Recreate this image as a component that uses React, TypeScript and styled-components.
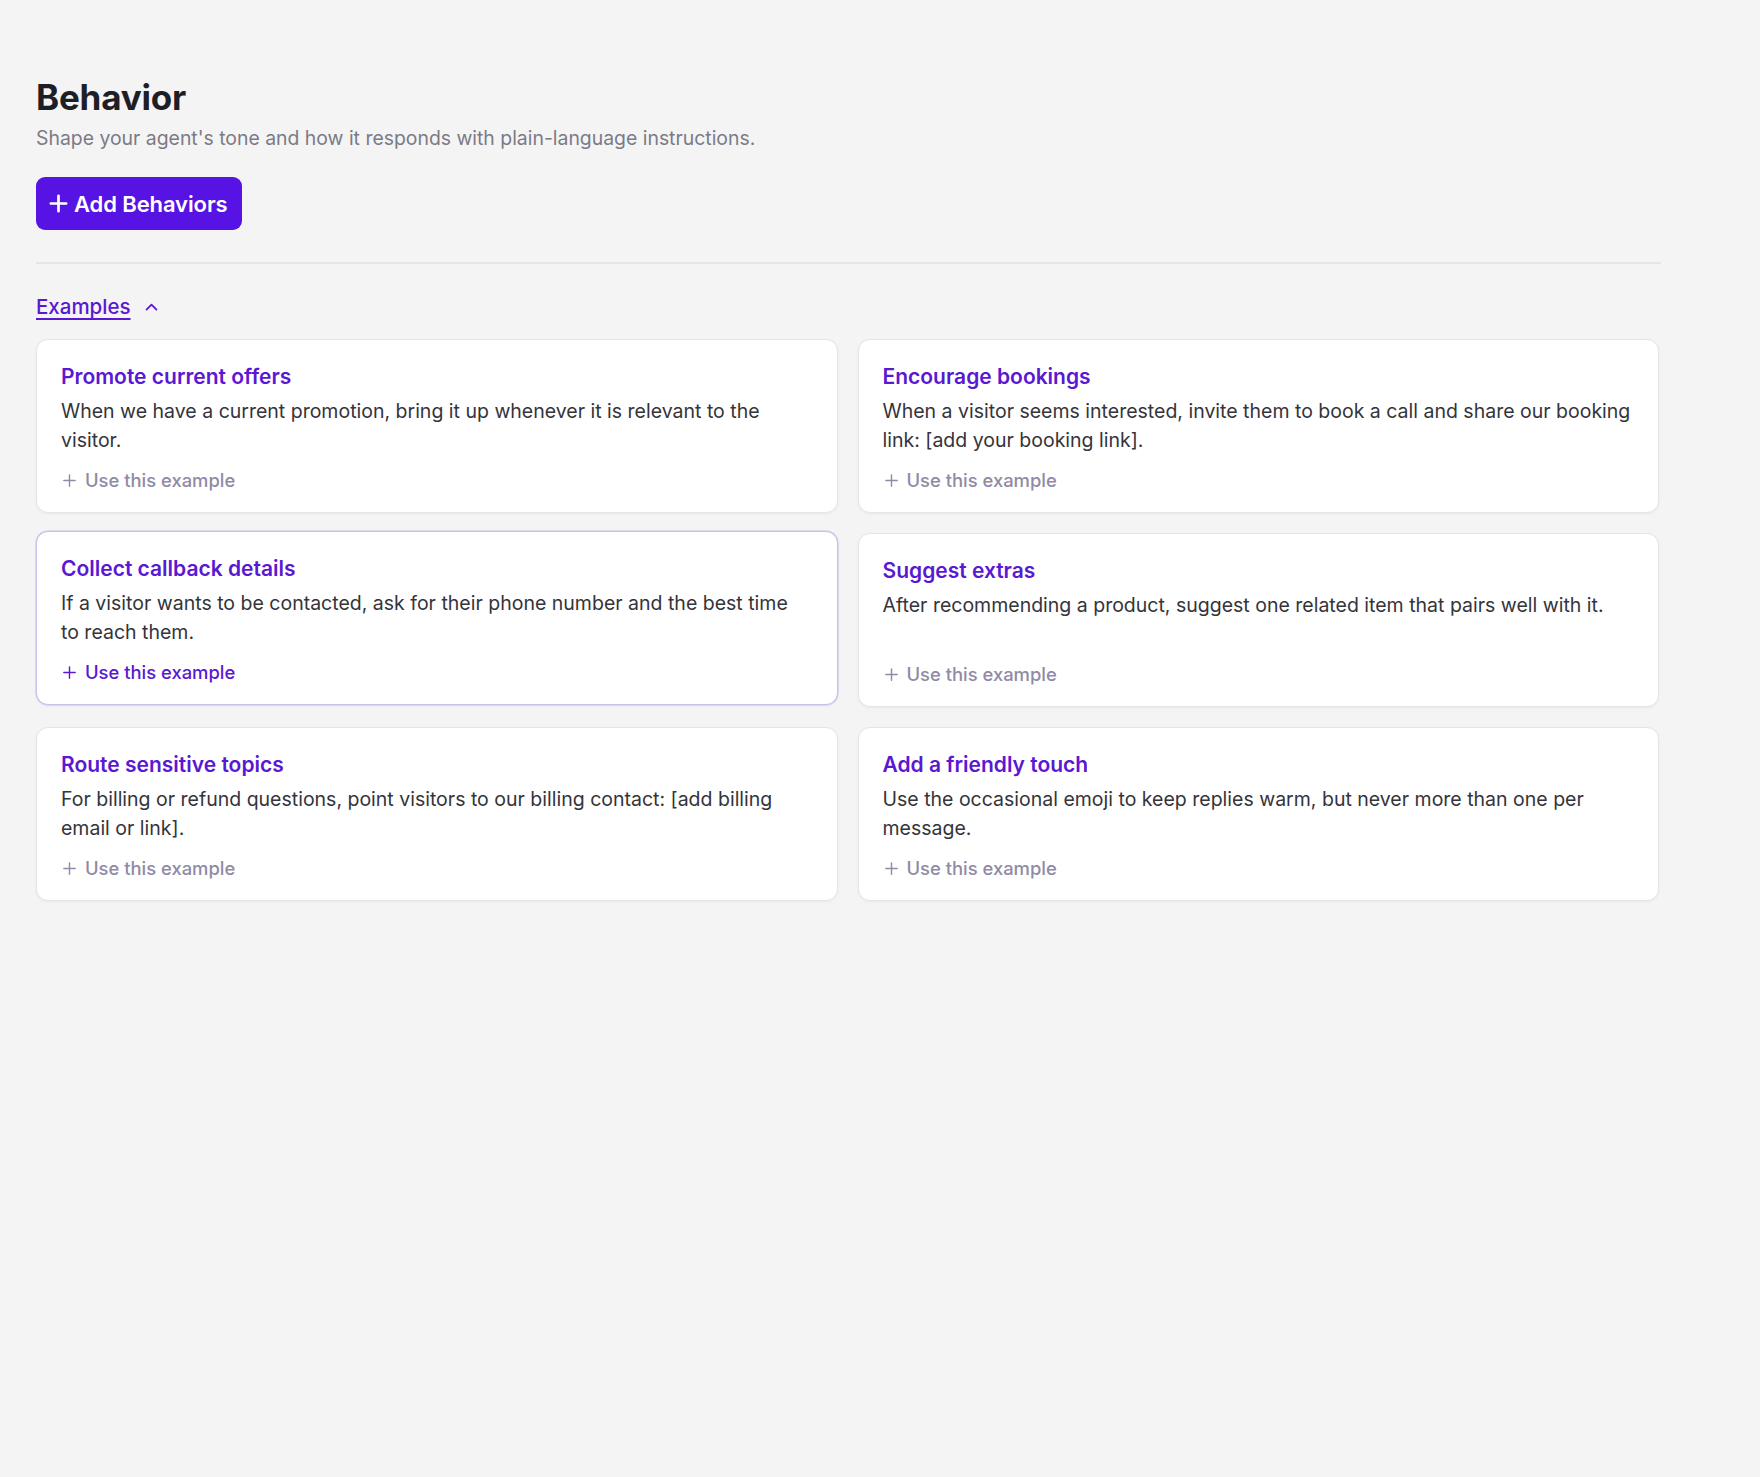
import styled, { createGlobalStyle } from 'styled-components';

type Example = {
  title: string;
  text: string;
};

// line breaks follow the layout of the original cards
const examples: Example[] = [
  {
    title: 'Promote current offers',
    text: 'When we have a current promotion, bring it up whenever it is relevant to the\nvisitor.',
  },
  {
    title: 'Encourage bookings',
    text: 'When a visitor seems interested, invite them to book a call and share our booking\nlink: [add your booking link].',
  },
  {
    title: 'Collect callback details',
    text: 'If a visitor wants to be contacted, ask for their phone number and the best time\nto reach them.',
  },
  {
    title: 'Suggest extras',
    text: 'After recommending a product, suggest one related item that pairs well with it.',
  },
  {
    title: 'Route sensitive topics',
    text: 'For billing or refund questions, point visitors to our billing contact: [add billing\nemail or link].',
  },
  {
    title: 'Add a friendly touch',
    text: 'Use the occasional emoji to keep replies warm, but never more than one per\nmessage.',
  },
];

const GlobalStyle = createGlobalStyle`
  html, body {
    margin: 0;
    padding: 0;
    background: #f4f4f5;
  }
  body {
    font-family: Inter, "Noto Sans", "Liberation Sans", sans-serif;
    color: #1f1f24;
    -webkit-font-smoothing: antialiased;
  }
`;

const Page = styled.main`
  min-height: 1477px;
  box-sizing: border-box;
  padding: 76px 36px 40px;
`;

const Section = styled.section`
  max-width: 1625px;
`;

const Title = styled.h1`
  margin: 0;
  font-size: 35px;
  line-height: 42px;
  font-weight: 700;
  letter-spacing: -0.2px;
  color: #1e1f26;
`;

const Subtitle = styled.p`
  margin: 7px 0 0;
  font-size: 19.4px;
  line-height: 26px;
  color: #7b7b86;
`;

const PrimaryButton = styled.button`
  margin-top: 26px;
  display: inline-flex;
  align-items: center;
  gap: 4px;
  height: 53px;
  padding: 0 14px 0 11px;
  border: none;
  border-radius: 9px;
  background: #5713e4;
  color: #ffffff;
  font-family: inherit;
  font-size: 22px;
  font-weight: 600;
  letter-spacing: -0.1px;
  cursor: pointer;
`;

const Divider = styled.hr`
  margin: 32px 0 0;
  border: none;
  border-top: 2px solid #e6e6e8;
`;

const ToggleLink = styled.button`
  margin-top: 30px;
  display: inline-flex;
  align-items: center;
  gap: 12px;
  padding: 0;
  border: none;
  background: none;
  font-family: inherit;
  font-size: 20.5px;
  line-height: 26px;
  font-weight: 500;
  color: #5a18d2;
  cursor: pointer;

  span {
    text-decoration: underline;
    text-underline-offset: 4px;
    text-decoration-thickness: 2px;
  }
`;

const Grid = styled.div`
  margin-top: 19px;
  display: grid;
  grid-template-columns: 1fr 1fr;
  gap: 20px 20px;
  max-width: 1623px;
`;

const Card = styled.div<{ $active?: boolean }>`
  box-sizing: border-box;
  min-height: 174px;
  padding: 22px 24px 20px 24px;
  display: flex;
  flex-direction: column;
  background: #ffffff;
  border: 1px solid ${(p) => (p.$active ? '#c8c2ec' : '#e5e5e8')};
  box-shadow: ${(p) =>
    p.$active ? '0 0 0 0.5px #c8c2ec, 0 1px 3px rgba(20, 20, 40, 0.05)' : '0 1px 3px rgba(20, 20, 40, 0.05)'};
  border-radius: 12px;
  transform: ${(p) => (p.$active ? 'translateY(-2px)' : 'none')};
`;

const CardTitle = styled.h3`
  margin: 0;
  font-size: 21px;
  line-height: 30px;
  font-weight: 600;
  color: #5a18d2;
`;

const CardText = styled.p`
  margin: 5px 0 0;
  font-size: 19.5px;
  line-height: 29px;
  color: #34343a;
  white-space: pre-line;
  flex: 1;
`;

const UseLink = styled.button<{ $active?: boolean }>`
  margin-top: 11px;
  align-self: flex-start;
  display: inline-flex;
  align-items: center;
  gap: 7px;
  padding: 0;
  border: none;
  background: none;
  font-family: inherit;
  font-size: 18.4px;
  line-height: 24px;
  font-weight: 500;
  color: ${(p) => (p.$active ? '#5a18d2' : '#8f8aa6')};
  cursor: pointer;
`;

const PlusIcon = ({ size, stroke }: { size: number; stroke: number }) => (
  <svg width={size} height={size} viewBox="0 0 24 24" fill="none">
    <path d="M12 4v16M4 12h16" stroke="currentColor" strokeWidth={stroke} strokeLinecap="round" />
  </svg>
);

const ChevronUp = () => (
  <svg width="17" height="17" viewBox="0 0 24 24" fill="none">
    <path d="M5 15l7-7 7 7" stroke="currentColor" strokeWidth="2.5" strokeLinecap="round" strokeLinejoin="round" />
  </svg>
);

const ExampleCard = ({ item, active }: { item: Example; active?: boolean }) => (
  <Card $active={active}>
    <CardTitle>{item.title}</CardTitle>
    <CardText>{item.text}</CardText>
    <UseLink $active={active}>
      <PlusIcon size={17} stroke={2} />
      Use this example
    </UseLink>
  </Card>
);

export default function App() {
  return (
    <>
      <GlobalStyle />
      <Page>
        <Section>
          <Title>Behavior</Title>
          <Subtitle>Shape your agent's tone and how it responds with plain-language instructions.</Subtitle>
          <PrimaryButton>
            <PlusIcon size={23} stroke={2.8} />
            Add Behaviors
          </PrimaryButton>
          <Divider />
          <ToggleLink>
            <span>Examples</span>
            <ChevronUp />
          </ToggleLink>
          <Grid>
            {examples.map((item, i) => (
              <ExampleCard key={item.title} item={item} active={i === 2} />
            ))}
          </Grid>
        </Section>
      </Page>
    </>
  );
}
